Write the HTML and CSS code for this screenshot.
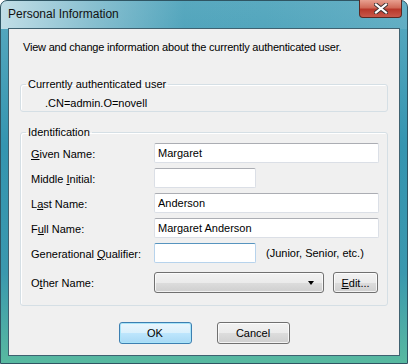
FILE: index.html
```html
<html>
  <head>
    <title>Personal Information</title>
    <link rel="stylesheet" href="styles.css">
  </head>
  <body>
    <div class='window'>
      <div class='titlebar'>
        <span class='title'>Personal Information</span>
        <div class='close'>
          <svg width='14' height='11' viewBox='0 0 14 11'>
            <path d='M2 1.5 L12 9.5 M12 1.5 L2 9.5' stroke='#3a3030' stroke-width='4' stroke-linecap='square' />
            <path d='M2 1.5 L12 9.5 M12 1.5 L2 9.5' stroke='#fff' stroke-width='2.2' stroke-linecap='square' />
          </svg>
        </div>
      </div>

      <div class='client'>
        <p class='intro'>View and change information about the currently authenticated user.</p>

        <fieldset class='group current'>
          <legend>Currently authenticated user</legend>
          <div class='value'>.CN=admin.O=novell</div>
        </fieldset>

        <fieldset class='group ident'>
          <legend>Identification</legend>
          <div class='form'>
            <label><u>G</u>iven Name:</label>
            <div class='field'><input class='wide' value='Margaret'></div>

            <label>Middle <u>I</u>nitial:</label>
            <div class='field'><input class='short'></div>

            <label>L<u>a</u>st Name:</label>
            <div class='field'><input class='wide' value='Anderson'></div>

            <label>F<u>u</u>ll Name:</label>
            <div class='field'><input class='wide' value='Margaret Anderson'></div>

            <label>Generational <u>Q</u>ualifier:</label>
            <div class='field'><input class='short hot'><span class='hint'>(Junior, Senior, etc.)</span></div>

            <label class='last'>O<u>t</u>her Name:</label>
            <div class='field last'>
              <div class='combo'><span class='arrow'></span></div>
              <button class='btn edit'><u>E</u>dit...</button>
            </div>
          </div>
        </fieldset>

        <div class='actions'>
          <button class='btn default'>OK</button>
          <button class='btn'>Cancel</button>
        </div>
      </div>
    </div>
  </body>
</html>
```

FILE: styles.css
```css
html, body {
  margin: 0;
  padding: 0;
  background: #fff;
}

.window {
  width: 408px;
  height: 364px;
  box-sizing: border-box;
  display: flex;
  flex-direction: column;
  border: 1px solid #2f5563;
  border-radius: 7px 7px 0 0;
  background:
    linear-gradient(to right, rgba(205,228,235,0.9) 0%, rgba(165,205,218,0.65) 22%, rgba(80,160,185,0.15) 45%, rgba(40,140,170,0) 65%, rgba(120,185,205,0.4) 100%) top / 100% 28px no-repeat,
    linear-gradient(to bottom, #5aaac0 0%, #3495b0 40%, #3a98ae 75%, #58b9a0 100%);
  font-family: 'Liberation Sans', Arial, sans-serif;
  color: #000;
}

.titlebar {
  height: 27px;
  display: flex;
  align-items: flex-start;
  padding-left: 7px;
}

.title {
  font-size: 12px;
  line-height: 15px;
  margin-top: 6px;
  color: #111;
}

.close {
  margin-left: auto;
  margin-right: 5px;
  margin-top: -1px;
  width: 43px;
  height: 18px;
  box-sizing: border-box;
  border: 1px solid #5a2a24;
  border-top: none;
  border-radius: 0 0 4px 4px;
  background: linear-gradient(to bottom, #e8a090 0%, #d06a58 45%, #b8382a 55%, #c8584a 100%);
  display: flex;
  align-items: center;
  justify-content: center;
}

.client {
  flex: 1;
  margin: 0 7px 7px 7px;
  border: 1px solid #3f6170;
  background: #f0f0f0;
  padding: 12px 0 0 0;
  font-size: 11px;
  line-height: 13px;
}

.intro {
  margin: 0 0 24px 14px;
  letter-spacing: -0.2px;
}

.group {
  margin: 0 11px 0 11px;
  border: 1px solid #d5dfe5;
  border-radius: 3px;
  box-shadow: inset 1px 1px 0 #fff;
  padding: 0 8px 1px 5px;
}

.group legend {
  padding: 0 2px;
  line-height: 13px;
}

.current .value {
  margin: 6px 0 0 19px;
}

.ident {
  margin-top: 14px;
  padding-bottom: 12px;
}

.form {
  display: grid;
  grid-template-columns: 123px 225px;
  grid-template-rows: repeat(5, 20px) 25px;
  row-gap: 5px;
  margin: 4px 0 0 5px;
}

.form label {
  display: block;
  line-height: 20px;
  padding-top: 1px;
}

.form label.last {
  padding-top: 5px;
}

.field {
  display: flex;
  align-items: center;
}

.field.last {
  align-items: flex-end;
}

input {
  height: 20px;
  box-sizing: border-box;
  border: 1px solid #dbdfe6;
  border-top-color: #abadb3;
  border-radius: 2px;
  background: #fff;
  font-family: 'Liberation Sans', Arial, sans-serif;
  font-size: 11px;
  padding: 0 3px;
  margin: 0;
  outline: none;
}

input.wide {
  width: 225px;
}

input.short {
  width: 102px;
}

input.hot {
  border-color: #b7d3ec;
  border-top-color: #5794bf;
}

.hint {
  margin-left: 10px;
}

.combo {
  width: 170px;
  height: 21px;
  box-sizing: border-box;
  border: 1px solid #707070;
  border-radius: 3px;
  background: linear-gradient(to bottom, #f2f2f2 0%, #ebebeb 50%, #dddddd 50%, #cfcfcf 100%);
  box-shadow: inset 0 0 0 1px rgba(255,255,255,0.7);
  position: relative;
}

.arrow {
  position: absolute;
  right: 9px;
  top: 8px;
  width: 0;
  height: 0;
  border-left: 3.5px solid transparent;
  border-right: 3.5px solid transparent;
  border-top: 4px solid #000;
}

.btn {
  height: 22px;
  box-sizing: border-box;
  border: 1px solid #707070;
  border-radius: 3px;
  background: linear-gradient(to bottom, #f2f2f2 0%, #ebebeb 50%, #dddddd 50%, #cfcfcf 100%);
  box-shadow: inset 0 0 0 1px rgba(255,255,255,0.75);
  font-family: 'Liberation Sans', Arial, sans-serif;
  font-size: 11px;
  color: #000;
  padding: 0;
  margin: 0;
}

.btn.edit {
  width: 45px;
  height: 21px;
  margin-left: 9px;
}

.actions {
  display: flex;
  justify-content: center;
  gap: 25px;
  margin-top: 16px;
}

.actions .btn {
  width: 73px;
}

.btn.default {
  border-color: #3c7fb1;
  background: linear-gradient(to bottom, #eaf6fd 0%, #d9f0fc 50%, #bee6fd 50%, #a7d9f5 100%);
  box-shadow: inset 0 0 0 1px #a8e4f9;
}
```
